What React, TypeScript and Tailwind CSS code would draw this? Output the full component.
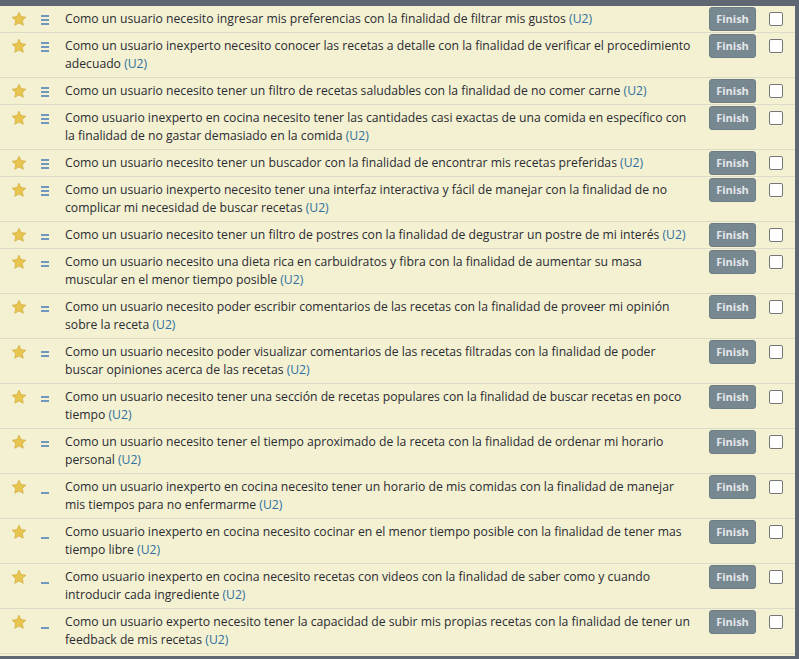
import React from "react";

type Story = { text: string; level: 3 | 2 | 1 };

const stories: Story[] = [
  { text: "Como un usuario necesito ingresar mis preferencias con la finalidad de filtrar mis gustos", level: 3 },
  { text: "Como un usuario inexperto necesito conocer las recetas a detalle con la finalidad de verificar el procedimiento adecuado", level: 3 },
  { text: "Como un usuario necesito tener un filtro de recetas saludables con la finalidad de no comer carne ", level: 3 },
  { text: "Como usuario inexperto en cocina necesito tener las cantidades casi exactas de una comida en específico con la finalidad de no gastar demasiado en la comida ", level: 3 },
  { text: "Como un usuario necesito tener un buscador con la finalidad de encontrar mis recetas preferidas", level: 3 },
  { text: "Como un usuario inexperto necesito tener una interfaz interactiva y fácil de manejar con la finalidad de no complicar mi necesidad de buscar recetas", level: 3 },
  { text: "Como un usuario necesito tener un filtro de postres con la finalidad de degustrar un postre de mi interés", level: 2 },
  { text: "Como un usuario necesito una dieta rica en carbuidratos y fibra con la finalidad de aumentar su masa muscular en el menor tiempo posible ", level: 2 },
  { text: "Como un usuario necesito poder escribir comentarios de las recetas con la finalidad de proveer mi opinión sobre la receta", level: 2 },
  { text: "Como un usuario necesito poder visualizar comentarios de las recetas filtradas con la finalidad de poder buscar opiniones acerca de las recetas", level: 2 },
  { text: "Como un usuario necesito tener una sección de recetas populares con la finalidad de buscar recetas en poco tiempo", level: 2 },
  { text: "Como un usuario necesito tener el tiempo aproximado de la receta con la finalidad de ordenar mi horario personal", level: 2 },
  { text: "Como un usuario inexperto en cocina necesito tener un horario de mis comidas con la finalidad de manejar mis tiempos para no enfermarme", level: 1 },
  { text: "Como usuario inexperto en cocina necesito cocinar en el menor tiempo posible con la finalidad de tener mas tiempo libre", level: 1 },
  { text: "Como usuario inexperto en cocina necesito recetas con videos con la finalidad de saber como y cuando introducir cada ingrediente", level: 1 },
  { text: "Como un usuario experto necesito tener la capacidad de subir mis propias recetas con la finalidad de tener un feedback de mis recetas", level: 1 },
];

const Star = () => (
  <svg width="16" height="16" viewBox="0 0 24 24">
    <path
      d="M12 1.8l3.1 6.6 7.2.9-5.3 5 1.4 7.1L12 17.9l-6.4 3.5 1.4-7.1-5.3-5 7.2-.9z"
      fill="#e8c54e"
      stroke="#cfa93a"
      strokeWidth="1"
      strokeLinejoin="round"
    />
  </svg>
);

const Priority = ({ level }: { level: number }) => {
  if (level === 3)
    return (
      <div className="flex flex-col gap-[2.5px] pt-[4px]">
        <div className="h-[1.5px] w-[8px] bg-[#6f97c0]" />
        <div className="h-[1.5px] w-[8px] bg-[#6f97c0]" />
        <div className="h-[1.5px] w-[8px] bg-[#6f97c0]" />
      </div>
    );
  if (level === 2)
    return (
      <div className="flex flex-col gap-[2.5px] pt-[7px]">
        <div className="h-[1.5px] w-[8px] bg-[#6f97c0]" />
        <div className="h-[1.5px] w-[8px] bg-[#6f97c0]" />
      </div>
    );
  return (
    <div className="pt-[13px]">
      <div className="h-[1.5px] w-[8px] bg-[#6f97c0]" />
    </div>
  );
};

const Row = ({ story }: { story: Story }) => (
  <div className="flex items-start border-b border-[#dcdbc8] pt-px">
    <div className="flex w-[65px] shrink-0 items-start pt-[4px]">
      <div className="ml-[11px] w-[30px]">
        <Star />
      </div>
      <Priority level={story.level} />
    </div>
    <p className="flex-1 pb-[4px] pr-[16px] pt-[3px] text-[12.2px] leading-[18px] text-[#2b2b33]">
      {story.text} <span className="text-[#2f6f9f]">(U2)</span>
    </p>
    <button className="mr-[13px] h-[24px] w-[47px] shrink-0 rounded-[3px] border border-[#6d7d86] bg-[#788891] text-[11px] font-bold text-[#e4e7e9]">
      Finish
    </button>
    <div className="mr-[12px] mt-[5px] h-[14px] w-[14px] shrink-0 rounded-[2px] border border-[#767676] bg-white" />
  </div>
);

export default function App() {
  return (
    <div
      className="h-[659px] w-[799px] overflow-hidden bg-[#5f6772] pb-[3px] pr-[4px] pt-[6px]"
      style={{ fontFamily: '"Open Sans", "Noto Sans", sans-serif' }}
    >
      <div className="h-full bg-[#f3f1d1]">
        {stories.map((s, i) => (
          <Row key={i} story={s} />
        ))}
      </div>
    </div>
  );
}
